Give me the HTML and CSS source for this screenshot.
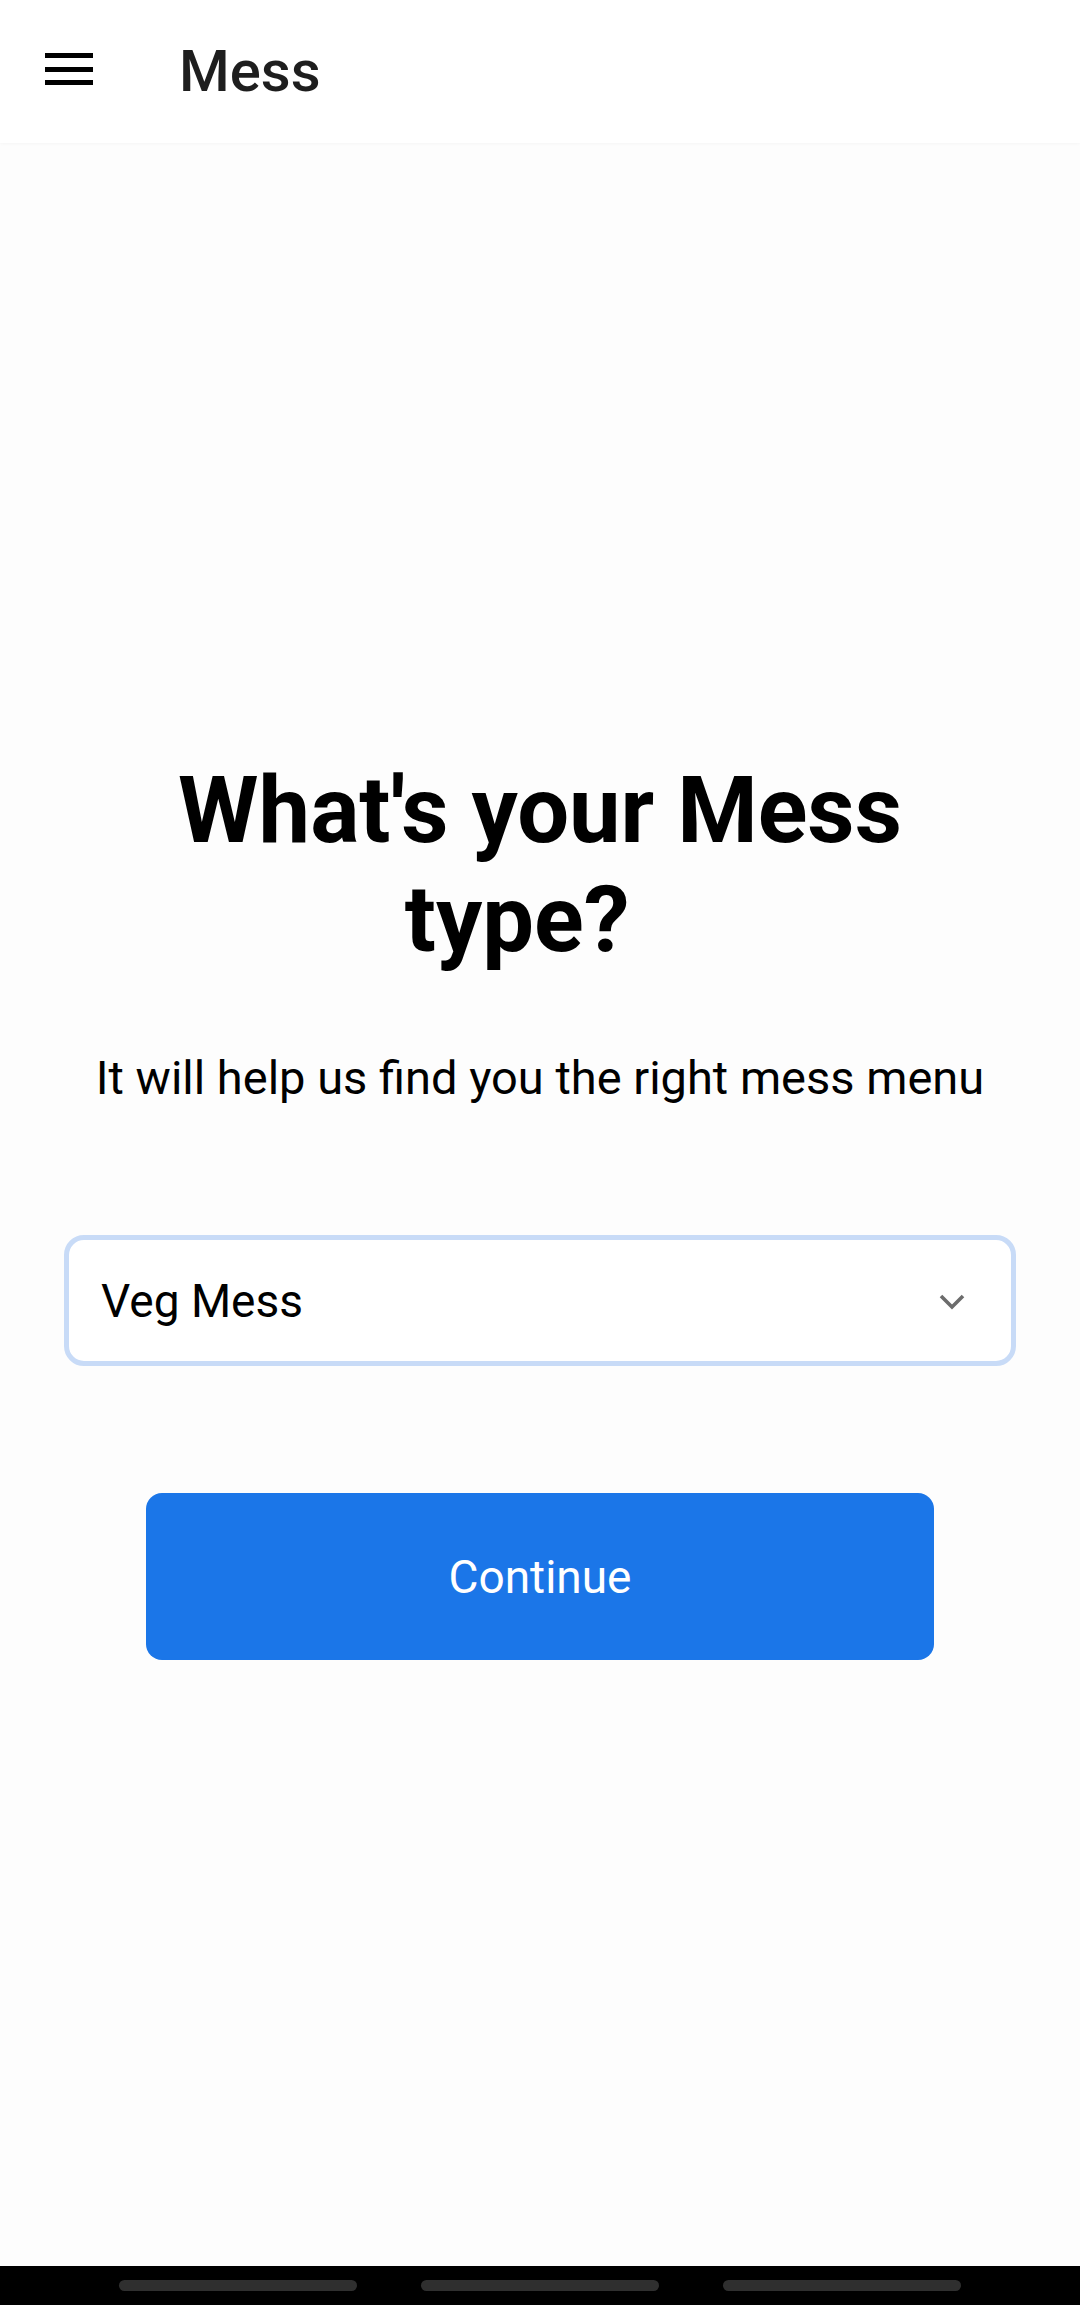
FILE: index.html
```html
<!DOCTYPE html>
<html lang="en">
<head>
  <meta charset="UTF-8">
  <meta name="viewport" content="width=device-width, initial-scale=1.0">
  <title>Mess</title>
  <link rel="stylesheet" href="styles.css">
</head>
<body>
  <div class="app">
    <div class="topbar">
      <button class="menu-btn" type="button" aria-label="Menu">
        <svg width="48" height="34" viewBox="0 0 48 34">
          <rect x="0" y="0" width="48" height="5" fill="#000"></rect>
          <rect x="0" y="14" width="48" height="5" fill="#000"></rect>
          <rect x="0" y="27" width="48" height="5" fill="#000"></rect>
        </svg>
      </button>
      <h1 class="topbar-title">Mess</h1>
    </div>

    <div class="content">
      <h2 class="question">What's your Mess type?&nbsp;&nbsp;</h2>
      <p class="hint">It will help us find you the right mess menu</p>

      <div class="select-box" id="messType">
        <span class="select-value">Veg Mess</span>
        <svg class="chevron" width="26" height="16" viewBox="0 0 26 16">
          <path d="M2 2 L13 13 L24 2" fill="none" stroke="#6c6c6c" stroke-width="3.6"></path>
        </svg>
      </div>

      <button class="continue-btn" type="button">Continue</button>
    </div>

    <div class="navbar">
      <span class="nav-pill"></span>
      <span class="nav-pill"></span>
      <span class="nav-pill"></span>
    </div>
  </div>
</body>
</html>
```

FILE: styles.css
```css
body {
  margin: 0;
  padding: 0;
  font-family: Roboto, "Liberation Sans", Arial, sans-serif;
  background-color: #fdfdfd;
}

.app {
  width: 1080px;
  height: 2305px;
  display: flex;
  flex-direction: column;
}

.topbar {
  height: 143px;
  flex-shrink: 0;
  background-color: #fff;
  display: flex;
  align-items: center;
  box-shadow: 0 1px 3px rgba(0, 0, 0, 0.03);
}

.menu-btn {
  margin-left: 45px;
  padding: 0;
  border: none;
  background: none;
  display: flex;
  margin-top: -3px;
}

.topbar-title {
  margin: -2px 0 0 86px;
  font-size: 58px;
  font-weight: 500;
  color: #1e1e1e;
}

.content {
  flex: 1;
  display: flex;
  flex-direction: column;
  align-items: center;
  justify-content: center;
  padding-top: 7px;
}

.question {
  margin: 0;
  width: 800px;
  text-align: center;
  font-size: 92px;
  font-weight: 700;
  line-height: 109px;
  color: #000;
}

.hint {
  margin: 76px 0 0;
  font-size: 47px;
  color: #000;
}

.select-box {
  margin-top: 130px;
  width: 896px;
  height: 121px;
  border: 5px solid #c8dbf7;
  border-radius: 20px;
  background-color: #fff;
  display: flex;
  align-items: center;
  justify-content: space-between;
  padding: 0 46px 0 0;
}

.select-value {
  margin-left: 32px;
  font-size: 46px;
  color: #000;
}

.chevron {
  margin-top: 2px;
}

.continue-btn {
  margin-top: 127px;
  width: 788px;
  height: 167px;
  border: none;
  border-radius: 16px;
  background-color: #1b76e8;
  color: #fff;
  font-family: Roboto, "Liberation Sans", Arial, sans-serif;
  font-size: 46px;
  cursor: pointer;
}

.navbar {
  height: 39px;
  box-sizing: border-box;
  flex-shrink: 0;
  background-color: #000;
  display: flex;
  justify-content: center;
  gap: 64px;
  padding-top: 14px;
}

.nav-pill {
  width: 238px;
  height: 11px;
  border-radius: 6px;
  background-color: #2f2f2f;
}
```
